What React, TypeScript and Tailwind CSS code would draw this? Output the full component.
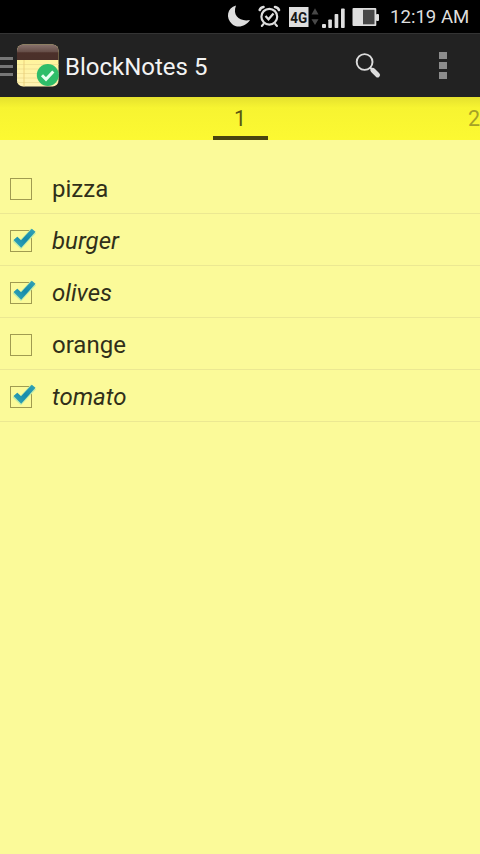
const items = [
  { name: "pizza", done: false },
  { name: "burger", done: true },
  { name: "olives", done: true },
  { name: "orange", done: false },
  { name: "tomato", done: true },
];

function StatusBar() {
  return (
    <div className="flex h-[33px] shrink-0 items-start justify-end bg-black pr-[11px] text-[#dedede]">
      <svg className="h-[33px] w-[160px] shrink-0" viewBox="220 0 160 33" fill="none">
        <path d="M236 5.5C227 8 225.5 18 232 24C238 29 246 26 250 20C240 22 232 16 236 5.5Z" fill="#dedede" />
        <g stroke="#dedede" strokeLinecap="round">
          <circle cx="269.3" cy="16.7" r="7.9" strokeWidth="2.2" />
          <path d="M265.5 16L268.5 19.3L273.5 13.5" strokeWidth="2.2" strokeLinecap="butt" />
          <path d="M259.7 10Q260.5 7.5 263.5 7M279 10Q278 7.5 275 7" strokeWidth="2.6" />
          <path d="M263.5 24L261.8 26M275.2 24L277 26" strokeWidth="2" />
        </g>
        <rect x="289" y="7" width="19.5" height="20" fill="#dedede" />
        <text x="290.3" y="22.5" textLength="17" lengthAdjust="spacingAndGlyphs" fontSize="15" fontWeight="700" fill="#171717">4G</text>
        <path d="M311.5 14.5L315 8.3L318.5 14.5ZM311.5 19.3H318.5L315 25Z" fill="#484848" />
        <g fill="#dedede">
          <rect x="322" y="24" width="4" height="4" rx="1" />
          <rect x="328.3" y="19.5" width="3.6" height="8.5" rx=".8" />
          <rect x="334.6" y="14" width="3.7" height="14" rx=".8" />
          <rect x="341" y="8.5" width="3.7" height="19.5" rx=".8" />
          <rect x="352.5" y="8" width="23.8" height="18" rx="1" />
          <rect x="376" y="14" width="3" height="7" rx="1" />
        </g>
        <rect x="363" y="9.8" width="11.5" height="14.5" fill="#484848" />
      </svg>
      <span className="ml-[10px] w-[79px] whitespace-nowrap text-[18.6px] leading-[35px]">12:19 AM</span>
    </div>
  );
}

function NotesLogo() {
  return (
    <svg className="h-[44px] w-[44px] shrink-0" viewBox="16 44 44 44">
      <defs>
        <linearGradient id="cover" x2="0" y2="1">
          <stop stopColor="#8b7570" />
          <stop offset=".48" stopColor="#674f49" />
          <stop offset=".55" stopColor="#4c302a" />
          <stop offset="1" stopColor="#4a302a" />
        </linearGradient>
        <linearGradient id="paper" x2="0" y2="1">
          <stop stopColor="#fff58e" />
          <stop offset="1" stopColor="#fff2b4" />
        </linearGradient>
        <clipPath id="logo-shape"><rect x="17" y="44.5" width="41.5" height="42" rx="6" /></clipPath>
      </defs>
      <g clipPath="url(#logo-shape)">
        <rect x="17" y="44" width="42" height="43" fill="url(#paper)" />
        <path d="M17 64.5H59M17 69H59M17 73.5H59M17 78H59M17 82.5H59" stroke="#eedc90" strokeWidth=".8" />
        <path d="M24 60V87" stroke="#ebce78" strokeWidth=".9" />
        <rect x="17" y="44" width="42" height="16" fill="url(#cover)" />
      </g>
      <circle cx="47.8" cy="75" r="11" fill="#2ebd69" />
      <path d="M42 75.3L46 79.3L53.3 71.5" fill="none" stroke="#e8fff0" strokeWidth="3" />
    </svg>
  );
}

function ActionBar() {
  return (
    <header className="flex h-[64px] shrink-0 items-center border-t border-[#343434] bg-[#222222] pt-px">
      <div className="flex w-[13px] flex-col gap-[5px] pt-px">
        <div className="h-[3px] bg-[#777]" />
        <div className="h-[3px] bg-[#777]" />
        <div className="h-[3px] bg-[#777]" />
      </div>
      <div className="ml-[3px] flex"><NotesLogo /></div>
      <h1 className="ml-[5px] flex-1 whitespace-nowrap pt-[2px] text-[24px] leading-[30px] text-[#f3f3f3]">BlockNotes 5</h1>
      <svg className="mr-[56px] h-[30px] w-[30px]" viewBox="353 51 30 30" fill="none" stroke="#dcdcdc">
        <circle cx="364.6" cy="62" r="7.9" strokeWidth="1.9" />
        <path d="M369.8 67.3L372.5 70" strokeWidth="2" />
        <path d="M372.8 70.2L377.6 75" strokeWidth="4.8" strokeLinecap="round" />
      </svg>
      <div className="mr-[33px] flex w-[8px] flex-col gap-[3px] pb-px">
        <div className="h-[7px] bg-[#8c8c8c]" />
        <div className="h-[7px] bg-[#8c8c8c]" />
        <div className="h-[7px] bg-[#8c8c8c]" />
      </div>
    </header>
  );
}

function CheckBox({ checked }: { checked: boolean }) {
  return (
    <svg className="h-[30px] w-[30px] shrink-0" viewBox="0 0 30 30" fill="none">
      <defs>
        <linearGradient id="tick" x1="0" y1="1" x2="1" y2="0">
          <stop stopColor="#38a9b9" />
          <stop offset=".5" stopColor="#168bab" />
          <stop offset="1" stopColor="#35a4b5" />
        </linearGradient>
      </defs>
      <rect x="2.5" y="5.5" width="21" height="21" stroke="#a09b50" />
      {checked && (
        <>
          <path d="M7 14L12.8 19.4L25.5 5.8" stroke="#c3eca9" strokeWidth="7" />
          <path d="M5.5 15L9.3 11.8L13 15.2L23.8 3.8L27.5 6.8L13.2 22.8Z" fill="url(#tick)" />
        </>
      )}
    </svg>
  );
}

export default function App() {
  return (
    <div className="flex h-[854px] w-[480px] flex-col overflow-hidden bg-[#fbfa99] font-[Roboto,sans-serif]">
      <StatusBar />
      <ActionBar />
      <nav className="grid h-[43px] shrink-0 grid-cols-[1fr_55px_1fr] bg-linear-to-b from-[#e5e12e] via-[#f7f431] via-25% to-[#fcf932] text-[21.5px] leading-[43px]">
        <span />
        <span className="h-[43px] border-b-4 border-[#49450f] text-center text-[#5b5712]">1</span>
        <span className="text-right text-[#a5a126]">2</span>
      </nav>
      <ul className="pt-[22px]">
        {items.map((item) => (
          <li key={item.name} className="flex h-[52.1px] items-center border-b border-[#ebe892] pl-2 text-[#302f19]">
            <CheckBox checked={item.done} />
            <span className={item.done ? "ml-[14px] pt-[2px] text-[24px] leading-[28px] italic" : "ml-[14px] pt-[2px] text-[24px] leading-[28px]"}>{item.name}</span>
          </li>
        ))}
      </ul>
    </div>
  );
}
